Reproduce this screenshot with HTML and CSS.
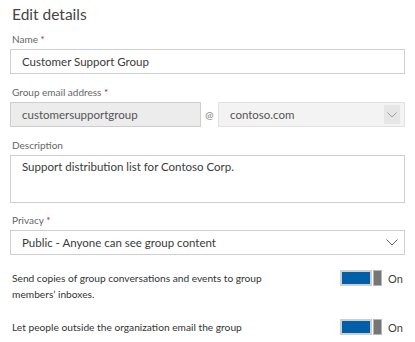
FILE: index.html
```html
<!DOCTYPE html>
<html lang="en">
<head>
    <meta charset="UTF-8">
    <meta name="viewport" content="width=device-width, initial-scale=1.0">
    <title>Edit details</title>
    <link rel="stylesheet" href="styles.css">
</head>
<body>
    <div class="panel">
        <h2>Edit details</h2>

        <div class="field">
            <label>Name <span class="req">*</span></label>
            <div class="box">Customer Support Group</div>
        </div>

        <div class="field">
            <label>Group email address <span class="req">*</span></label>
            <div class="email-row">
                <div class="box box-disabled">customersupportgroup</div>
                <span class="at">@</span>
                <div class="box box-select box-muted">
                    <span>contoso.com</span>
                    <span class="arrow arrow-boxed">
                        <svg width="10" height="6" viewBox="0 0 10 6"><path d="M0.5 0.5 L5 5 L9.5 0.5" fill="none" stroke="#9a9a9a" stroke-width="1"/></svg>
                    </span>
                </div>
            </div>
        </div>

        <div class="field field-tight">
            <label>Description</label>
            <div class="box box-area">Support distribution list for Contoso Corp.</div>
        </div>

        <div class="field">
            <label>Privacy <span class="req">*</span></label>
            <div class="box box-select">
                <span>Public - Anyone can see group content</span>
                <span class="arrow">
                    <svg width="12" height="7" viewBox="0 0 12 7"><path d="M0.5 0.5 L6 6 L11.5 0.5" fill="none" stroke="#666" stroke-width="1"/></svg>
                </span>
            </div>
        </div>

        <div class="toggle-row">
            <p>Send copies of group conversations and events to group members’ inboxes.</p>
            <div class="switch"><span class="track"></span><span class="thumb"></span></div>
            <span class="state">On</span>
        </div>

        <div class="toggle-row">
            <p>Let people outside the organization email the group</p>
            <div class="switch"><span class="track"></span><span class="thumb"></span></div>
            <span class="state">On</span>
        </div>
    </div>
</body>
</html>
```

FILE: styles.css
```css
body {
    margin: 0;
    padding: 0;
    background: #fff;
    font-family: Lato, "Noto Sans", sans-serif;
    color: #333;
}

.panel {
    padding: 2px 10px 0 10px;
}

h2 {
    font-size: 15.5px;
    font-weight: normal;
    color: #444;
    line-height: 24px;
    margin: 0 0 6px 2px;
}

.field {
    margin-bottom: 11px;
}

.field-tight {
    margin-bottom: 10px;
}

label {
    display: block;
    font-size: 10px;
    line-height: 14px;
    color: #666;
    margin: 0 0 3px 2px;
}

.req {
    color: #c8102e;
}

.box {
    box-sizing: border-box;
    height: 25px;
    border: 1px solid #cfcfcf;
    padding: 0 11px;
    font-size: 11.5px;
    line-height: 23px;
    color: #3a3a3a;
    background: #fff;
}

.box-disabled {
    width: 191px;
    background: #ececec;
    border-color: #cdcdcd;
    color: #555;
}

.box-muted {
    flex: 1;
    background: #f3f3f3;
    border-color: #e2e2e2;
    color: #555;
}

.box-area {
    height: 48px;
    padding-top: 2px;
    line-height: 18px;
}

.box-select {
    display: flex;
    justify-content: space-between;
    align-items: center;
    padding-right: 4px;
}

.arrow {
    display: flex;
    align-items: center;
    justify-content: center;
    width: 16px;
}

.arrow-boxed {
    height: 19px;
    background: #e6e6e6;
}

.email-row {
    display: flex;
    align-items: center;
}

.at {
    width: 17px;
    text-align: center;
    font-size: 10px;
    color: #777;
}

.toggle-row {
    display: flex;
    align-items: flex-start;
    margin-top: 15px;
}

.toggle-row + .toggle-row {
    margin-top: 17px;
}

.toggle-row p {
    flex: 1;
    margin: 0 0 0 2px;
    font-size: 10.2px;
    line-height: 16px;
    color: #333;
    padding-right: 50px;
}

.switch {
    display: flex;
    gap: 1px;
    height: 16px;
}

.track {
    box-sizing: border-box;
    width: 32px;
    height: 16px;
    background: #005fa8;
    border: 2px solid #cfcfcf;
}

.thumb {
    box-sizing: border-box;
    width: 9px;
    height: 16px;
    background: #767676;
    border: 1px solid #b5b5b5;
}

.state {
    width: 17px;
    margin-left: 6px;
    font-size: 11px;
    line-height: 17px;
    color: #444;
}
```
